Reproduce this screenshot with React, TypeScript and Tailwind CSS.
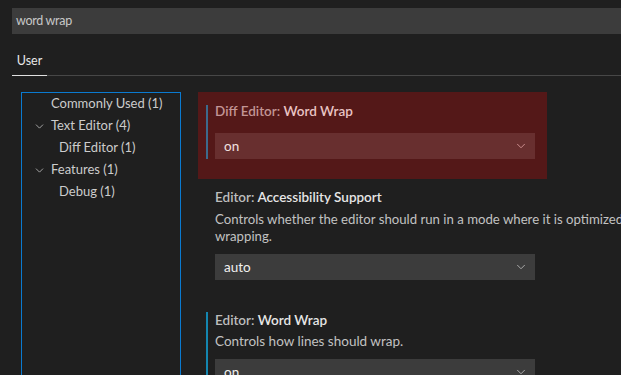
import React from 'react';
import { ChevronDown } from 'lucide-react';

interface TreeItem {
  label: string;
  count: number;
  depth: number;
  expandable?: boolean;
}

const tree: TreeItem[] = [
  { label: 'Commonly Used', count: 1, depth: 0 },
  { label: 'Text Editor', count: 4, depth: 0, expandable: true },
  { label: 'Diff Editor', count: 1, depth: 1 },
  { label: 'Features', count: 1, depth: 0, expandable: true },
  { label: 'Debug', count: 1, depth: 1 },
];

function Select({ value, highlighted }: { value: string; highlighted?: boolean }) {
  return (
    <div
      className={`flex h-[26px] w-[320px] items-center justify-between pl-[9px] pr-[7px] ${
        highlighted ? 'bg-[#682f2f] text-[#f0e0e0]' : 'bg-[#3c3c3c] text-[#f0f0f0]'
      }`}
    >
      <span>{value}</span>
      <ChevronDown
        className={`h-[14px] w-[14px] ${highlighted ? 'text-[#d89a9a]' : 'text-[#b8b8b8]'}`}
        strokeWidth={1.5}
      />
    </div>
  );
}

export default function App() {
  return (
    <div
      className="h-[375px] w-[621px] overflow-hidden bg-[#1f1f1f] text-[13.5px] text-[#cccccc]"
      style={{ fontFamily: 'Lato, "Noto Sans", sans-serif' }}
    >
      {/* Search */}
      <div className="ml-3 mt-2 flex h-[26px] items-center bg-[#3c3c3c] pl-[4px] text-[12.5px] tracking-[-0.3px] text-[#c8c8c8]">
        word wrap
      </div>

      {/* Tabs */}
      <div className="ml-3 mt-[13px] flex h-[29px] border-b border-[#474747]">
        <div className="relative flex w-[35px] items-start justify-center pt-[5px] text-[12.5px] text-[#e8e8e8]">
          User
          <div className="absolute -bottom-px left-0 right-0 h-px bg-[#e0e0e0]" />
        </div>
      </div>

      <div className="mt-4 flex">
        {/* Tree */}
        <div className="ml-[21px] h-[300px] w-[160px] shrink-0 border border-b-0 border-[#0a7ad0] text-[13px]">
          {tree.map((item) => (
            <div key={item.label} className="flex h-[22px] items-center whitespace-nowrap">
              <div className={`flex shrink-0 justify-end pr-[5px] ${item.depth ? 'w-[37px]' : 'w-[29px]'}`}>
                {item.expandable && (
                  <ChevronDown className="h-[13px] w-[13px] text-[#c0c0c0]" strokeWidth={1.5} />
                )}
              </div>
              <span>
                {item.label} ({item.count})
              </span>
            </div>
          ))}
        </div>

        {/* Settings */}
        <div className="ml-[17px] min-w-0 flex-1">
          {/* Modified + highlighted */}
          <div className="w-[349px] bg-[#541818] pb-[20px] pl-2 pt-[11px]">
            <div className="flex">
              <div className="mt-[2px] w-[2px] shrink-0 self-stretch bg-[#3d6a8c]" />
              <div className="pl-[7px]">
                <div className="leading-[17px] font-semibold">
                  <span className="text-[#c39595]">Diff Editor: </span>
                  <span className="text-[#e9c4c4]">Word Wrap</span>
                </div>
                <div className="mt-[13px]">
                  <Select value="on" highlighted />
                </div>
              </div>
            </div>
          </div>

          {/* Not modified */}
          <div className="pb-[21px] pl-2 pt-[10px]">
            <div className="flex">
              <div className="w-[2px] shrink-0 self-stretch" />
              <div className="pl-[7px]">
                <div className="leading-[17px] font-semibold">
                  <span className="text-[#bdbdbd]">Editor: </span>
                  <span className="text-[#e6e6e6]">Accessibility Support</span>
                </div>
                <div className="mt-[5px] w-[720px] text-[13.2px] leading-[17px] text-[#c2c2c2]">
                  Controls whether the editor should run in a mode where it is optimized for screen readers. Setting to on will disable word wrapping.
                </div>
                <div className="mt-[9px]">
                  <Select value="auto" />
                </div>
              </div>
            </div>
          </div>

          {/* Modified */}
          <div className="pl-2 pt-[11px]">
            <div className="flex">
              <div className="w-[2px] shrink-0 self-stretch bg-[#1486b0]" />
              <div className="pl-[7px]">
                <div className="leading-[17px] font-semibold">
                  <span className="text-[#bdbdbd]">Editor: </span>
                  <span className="text-[#e6e6e6]">Word Wrap</span>
                </div>
                <div className="mt-[4px] leading-[17px] text-[#c2c2c2]">
                  Controls how lines should wrap.
                </div>
                <div className="mt-[9px]">
                  <Select value="on" />
                </div>
              </div>
            </div>
          </div>
        </div>
      </div>
    </div>
  );
}
